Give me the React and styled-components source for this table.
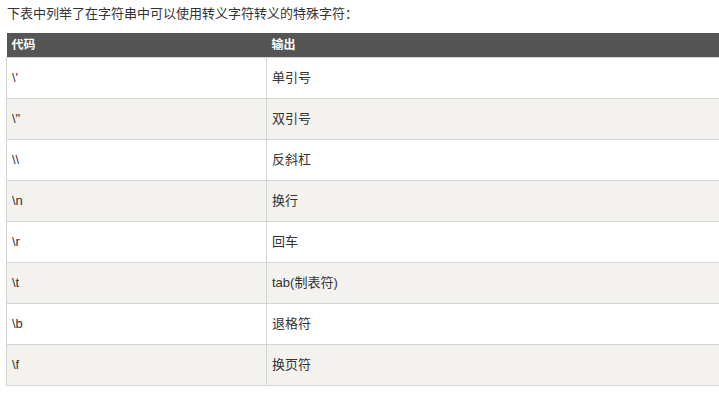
import React from "react";
import styled, { createGlobalStyle } from "styled-components";

const Global = createGlobalStyle`
  html, body { margin: 0; padding: 0; background: #fff; overflow: hidden; }
  body { font-family: "Liberation Sans", "Noto Sans CJK SC", sans-serif; color: #333; }
`;

const Page = styled.div`
  padding: 0 0 0 6px;
  width: 100%;
  box-sizing: border-box;
  overflow: hidden;
`;

const Intro = styled.p`
  margin: 0;
  padding: 5px 0 0 1px;
  height: 33px;
  box-sizing: border-box;
  font-size: 13px;
  line-height: 18px;
  color: #333;
`;

const Table = styled.table`
  border-collapse: collapse;
  width: 780px;
  font-size: 13px;
  table-layout: fixed;
`;

const HeadCell = styled.th`
  background: #555555;
  color: #fff;
  font-weight: bold;
  font-size: 12px;
  text-align: left;
  height: 24px;
  padding: 0 5px;
  box-sizing: border-box;
  line-height: 16px;
  width: ${(p) => p.$w || "auto"};
`;

const Row = styled.tr`
  background: ${(p) => (p.$alt ? "#f3f2ef" : "#fff")};
`;

const Cell = styled.td`
  border: 1px solid #d4d4d4;
  height: 41px;
  box-sizing: border-box;
  padding: 0 5px;
  vertical-align: middle;
  color: #333;
  line-height: 18px;
`;

const rows = [
  ["\\'", "单引号"],
  ['\\"', "双引号"],
  ["\\\\", "反斜杠"],
  ["\\n", "换行"],
  ["\\r", "回车"],
  ["\\t", "tab(制表符)"],
  ["\\b", "退格符"],
  ["\\f", "换页符"],
];

export default function App() {
  return (
    <>
      <Global />
      <Page>
        <Intro>下表中列举了在字符串中可以使用转义字符转义的特殊字符：</Intro>
        <Table>
          <thead>
            <tr>
              <HeadCell $w="260px">代码</HeadCell>
              <HeadCell>输出</HeadCell>
            </tr>
          </thead>
          <tbody>
            {rows.map(([c, o], i) => (
              <Row key={i} $alt={i % 2 === 1}>
                <Cell>{c}</Cell>
                <Cell>{o}</Cell>
              </Row>
            ))}
          </tbody>
        </Table>
      </Page>
    </>
  );
}
